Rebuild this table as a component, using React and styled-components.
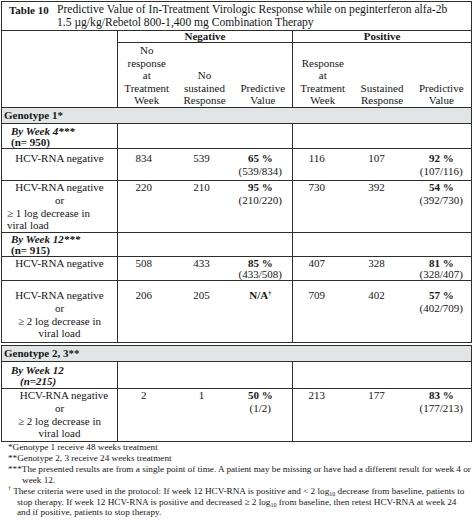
import React from 'react';
import styled, { createGlobalStyle } from 'styled-components';

const LINE = '#2e2e2e';
const SHADE = '#e1e5e5';

const Global = createGlobalStyle`
  html, body { margin: 0; padding: 0; background: #ffffff; }
  body {
    font-family: "Liberation Serif", "Times New Roman", serif;
    color: #161616;
  }
`;

const Page = styled.div`
  width: 474px;
  padding: 1px 0 0 1px;
  box-sizing: border-box;
`;

const Table = styled.table`
  width: 470px;
  border-collapse: collapse;
  table-layout: fixed;
  border: 1px solid ${LINE};
  font-size: 11px;
  line-height: 12.65px;
  margin-top: ${p => p.$gap || 0}px;
`;

const Row = styled.tr`
  height: ${p => p.$h}px;
`;

const Cell = styled.td`
  border-top: 1px solid ${LINE};
  border-bottom: 1px solid ${LINE};
  border-right: ${p => (p.$divider ? `1px solid ${LINE}` : 'none')};
  padding: ${p => p.$pt ?? 1}px ${p => p.$pr ?? 0}px 0 ${p => p.$pl ?? 0}px;
  line-height: ${p => (p.$lh ? `${p.$lh}px` : 'inherit')};
  vertical-align: ${p => p.$valign || 'top'};
  text-align: ${p => p.$align || 'center'};
  font-weight: ${p => (p.$bold ? 700 : 400)};
  overflow: visible;
  white-space: nowrap;
`;

const TitleWrap = styled.div`
  display: flex;
  align-items: flex-start;
  text-align: left;
`;

const TableNo = styled.span`
  flex: 0 0 48px;
  font-weight: 700;
`;

const TitleText = styled.span`
  flex: 1;
  font-size: 11.6px;
`;

const GroupCell = styled(Cell)`
  background: ${SHADE};
  text-align: left;
  font-weight: 700;
  padding: 1px 0 0 2px;
`;

const LabelLine = styled.span`
  display: block;
  text-align: ${p => p.$align || 'center'};
  padding-left: ${p => p.$indent || 0}px;
`;

const Strong = styled.b`
  font-weight: 700;
`;

const StrongItalic = styled.b`
  font-weight: 700;
  font-style: italic;
  padding-left: ${p => p.$indent || 0}px;
`;

const Sup = styled.sup`
  font-size: 6px;
  line-height: 0;
  vertical-align: 4px;
`;

const Notes = styled.div`
  font-size: 9.2px;
  line-height: 10.9px;
  padding: 0 0 0 7px;
`;

const Note = styled.div`
  padding-left: ${p => p.$hang}px;
  text-indent: -${p => p.$hang}px;
  white-space: nowrap;
`;

const Sub = styled.sub`
  font-size: 6px;
  line-height: 0;
  vertical-align: -2px;
`;

const Label = ({ lines, pt, lh }) => (
  <Cell $divider $pt={pt} $lh={lh}>
    {lines.map((l, i) => {
      const line = typeof l === 'string' ? { text: l } : l;
      return (
        <LabelLine key={i} $align={line.align} $indent={line.indent}>
          {line.text}
        </LabelLine>
      );
    })}
  </Cell>
);

const Pred = ({ pct, frac, divider, pt, lh, shift = 0 }) => (
  <Cell $divider={divider} $pt={pt} $lh={lh} $pr={shift}>
    <Strong>{pct}</Strong>
    <br />
    {frac}
  </Cell>
);

const Num = ({ v, pt, lh, shift = 6 }) => (
  <Cell $pt={pt} $pr={shift} $lh={lh}>
    {v}
  </Cell>
);

const DataRow = ({ h, pt, lh, label, neg, pos }) => (
  <Row $h={h}>
    <Label lines={label} pt={pt} lh={lh} />
    <Num v={neg[0]} pt={pt} lh={lh} />
    <Num v={neg[1]} pt={pt} lh={lh} />
    <Pred pct={neg[2]} frac={neg[3]} divider pt={pt} lh={lh} shift={5} />
    <Num v={pos[0]} pt={pt} lh={lh} shift={12} />
    <Num v={pos[1]} pt={pt} lh={lh} shift={11} />
    <Pred pct={pos[2]} frac={pos[3]} pt={pt} lh={lh} />
  </Row>
);

const WeekRow = ({ h, pt, children }) => (
  <Row $h={h}>
    <Cell $divider $align="left" $pl={9} $pt={pt} $lh={11}>
      {children}
    </Cell>
    <Cell />
    <Cell />
    <Cell $divider />
    <Cell />
    <Cell />
    <Cell />
  </Row>
);

const Cols = () => (
  <colgroup>
    <col style={{ width: 116 }} />
    <col style={{ width: 58 }} />
    <col style={{ width: 58 }} />
    <col style={{ width: 59 }} />
    <col style={{ width: 60 }} />
    <col style={{ width: 59 }} />
    <col style={{ width: 60 }} />
  </colgroup>
);

const orLines = n => ['HCV-RNA negative', 'or', `≥ ${n} log decrease in`, 'viral load'];

const week4OrLines = [
  'HCV-RNA negative',
  'or',
  { text: '≥ 1 log decrease in', align: 'left', indent: 5 },
  { text: 'viral load', align: 'left', indent: 5 },
];

const g23OrLines = [
  { text: 'HCV-RNA negative', indent: 9 },
  { text: 'or', indent: 0 },
  '≥ 2 log decrease in',
  'viral load',
];

export default function App() {
  return (
    <Page>
      <Global />
      <Table>
        <Cols />
        <tbody>
          <Row $h={29}>
            <Cell colSpan={7} $align="left" $pl={7} $pt={2}>
              <TitleWrap>
                <TableNo>Table 10</TableNo>
                <TitleText>
                  Predictive Value of In-Treatment Virologic Response while on peginterferon alfa-2b
                  <br />
                  1.5 µg/kg/Rebetol 800-1,400 mg Combination Therapy
                </TitleText>
              </TitleWrap>
            </Cell>
          </Row>
          <Row $h={12}>
            <Cell rowSpan={2} $divider />
            <Cell colSpan={3} $divider $bold $pt={0} $lh={11}>
              Negative
            </Cell>
            <Cell colSpan={3} $bold $pt={0} $lh={11}>
              Positive
            </Cell>
          </Row>
          <Row $h={65}>
            <Cell $valign="bottom" $pt={0} $lh={12.6}>
              No<br />response<br />at<br />Treatment<br />Week
            </Cell>
            <Cell $valign="bottom" $pt={0} $lh={12.6}>
              No<br />sustained<br />Response
            </Cell>
            <Cell $divider $valign="bottom" $pt={0} $lh={12.6}>
              Predictive<br />Value
            </Cell>
            <Cell $valign="bottom" $pt={0} $lh={12.6}>
              Response<br />at<br />Treatment<br />Week
            </Cell>
            <Cell $valign="bottom" $pt={0} $lh={12.6}>
              Sustained<br />Response
            </Cell>
            <Cell $valign="bottom" $pt={0} $lh={12.6}>
              Predictive<br />Value
            </Cell>
          </Row>
          <Row $h={16}>
            <GroupCell colSpan={7}>Genotype 1*</GroupCell>
          </Row>
          <WeekRow h={25} pt={2}>
            <StrongItalic>By Week 4***</StrongItalic>
            <br />
            <Strong>(n= 950)</Strong>
          </WeekRow>
          <DataRow
            h={32}
            pt={3}
            label={['HCV-RNA negative']}
            neg={['834', '539', '65 %', '(539/834)']}
            pos={['116', '107', '92 %', '(107/116)']}
          />
          <DataRow
            h={52}
            pt={0}
            lh={12.75}
            label={week4OrLines}
            neg={['220', '210', '95 %', '(210/220)']}
            pos={['730', '392', '54 %', '(392/730)']}
          />
          <WeekRow h={24} pt={1}>
            <StrongItalic>By Week 12***</StrongItalic>
            <br />
            <Strong>(n= 915)</Strong>
          </WeekRow>
          <DataRow
            h={24}
            pt={1}
            lh={11}
            label={['HCV-RNA negative']}
            neg={['508', '433', '85 %', '(433/508)']}
            pos={['407', '328', '81 %', '(328/407)']}
          />
          <Row $h={62}>
            <Label lines={orLines(2)} pt={8} lh={12.75} />
            <Num v="206" pt={8} lh={12.75} />
            <Num v="205" pt={8} lh={12.75} />
            <Cell $divider $pt={8} $lh={12.75} $pr={5}>
              <Strong>
                N/A<Sup>†</Sup>
              </Strong>
            </Cell>
            <Num v="709" pt={8} lh={12.75} shift={12} />
            <Num v="402" pt={8} lh={12.75} shift={11} />
            <Pred pct="57 %" frac="(402/709)" pt={8} lh={12.75} />
          </Row>
        </tbody>
      </Table>
      <Table $gap={2}>
        <Cols />
        <tbody>
          <Row $h={16}>
            <GroupCell colSpan={7}>Genotype 2, 3**</GroupCell>
          </Row>
          <Row $h={27}>
            <Cell $divider $align="left" $pl={9} $pt={3} $lh={11}>
              <StrongItalic>By Week 12</StrongItalic>
              <br />
              <StrongItalic $indent={9}>(n=215)</StrongItalic>
            </Cell>
            <Cell />
            <Cell />
            <Cell $divider />
            <Cell />
            <Cell />
            <Cell />
          </Row>
          <DataRow
            h={53}
            pt={0}
            lh={12.75}
            label={g23OrLines}
            neg={['2', '1', '50 %', '(1/2)']}
            pos={['213', '177', '83 %', '(177/213)']}
          />
        </tbody>
      </Table>
      <Notes>
        <Note $hang={0}>*Genotype 1 receive 48 weeks treatment</Note>
        <Note $hang={0}>**Genotype 2, 3 receive 24 weeks treatment</Note>
        <Note $hang={14}>
          ***The presented results are from a single point of time. A patient may be missing or have had a different result for week 4 or
          <br />
          week 12.
        </Note>
        <Note $hang={9}>
          <Sup>†</Sup> These criteria were used in the protocol: If week 12 HCV-RNA is positive and &lt; 2 log<Sub>10</Sub> decrease from baseline, patients to
          <br />
          stop therapy. If week 12 HCV-RNA is positive and decreased ≥ 2 log<Sub>10</Sub> from baseline, then retest HCV-RNA at week 24
          <br />
          and if positive, patients to stop therapy.
        </Note>
      </Notes>
    </Page>
  );
}
